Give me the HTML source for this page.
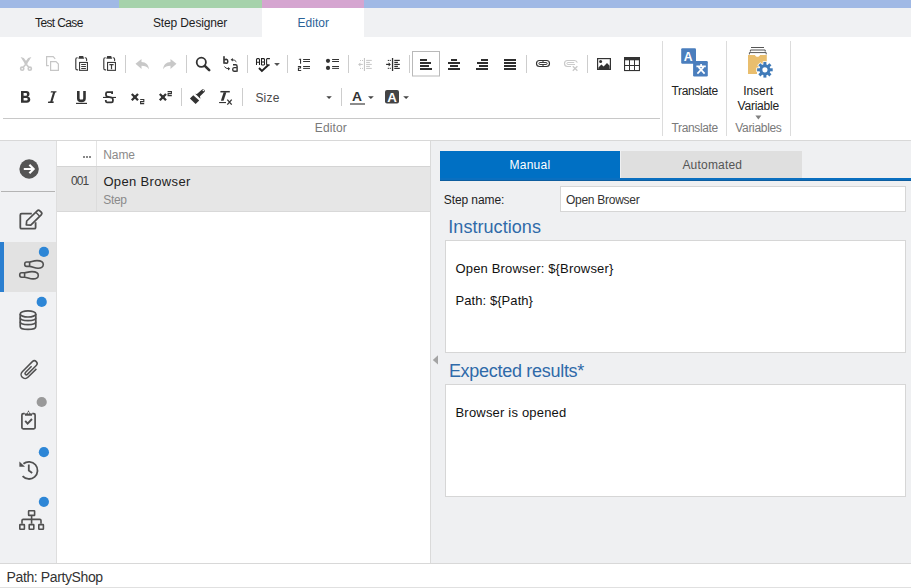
<!DOCTYPE html>
<html><head><meta charset="utf-8">
<style>
html,body{margin:0;padding:0;}
body{width:911px;height:588px;position:relative;overflow:hidden;background:#fff;font-family:"Liberation Sans",sans-serif;}
.b{position:absolute;}
.t{position:absolute;white-space:pre;font-family:"Liberation Sans",sans-serif;}
</style></head><body>
<!-- top color stripe -->
<div class="b" style="left:0;top:0;width:119px;height:8px;background:#a0b9e5"></div>
<div class="b" style="left:119px;top:0;width:143px;height:8px;background:#a6d2ab"></div>
<div class="b" style="left:262px;top:0;width:102px;height:8px;background:#d5a5d0"></div>
<div class="b" style="left:364px;top:0;width:547px;height:8px;background:#a0b9e5"></div>
<!-- tab bar -->
<div class="b" style="left:0;top:8px;width:911px;height:29px;background:#f0f1f3"></div>
<div class="b" style="left:262px;top:8px;width:102px;height:29px;background:#fff"></div>
<!-- ribbon -->
<div class="b" style="left:3px;top:118px;width:657px;height:1px;background:#c8c8c8"></div>
<div class="b" style="left:662px;top:41px;width:1px;height:95px;background:#dcdcdc"></div>
<div class="b" style="left:726px;top:41px;width:1px;height:95px;background:#dcdcdc"></div>
<div class="b" style="left:790px;top:41px;width:1px;height:95px;background:#dcdcdc"></div>
<div class="b" style="left:0;top:140px;width:911px;height:1px;background:#d8d8d8"></div>
<!-- sidebar -->
<div class="b" style="left:0;top:141px;width:56px;height:422px;background:#f0f1f3"></div>
<div class="b" style="left:56px;top:141px;width:1px;height:422px;background:#dedede"></div>
<div class="b" style="left:1px;top:191px;width:54px;height:1px;background:#b4b4b4"></div>
<div class="b" style="left:0;top:242px;width:56px;height:50px;background:#e2e2e2"></div>
<div class="b" style="left:0;top:242px;width:4px;height:50px;background:#2b7fd0"></div>
<!-- grid -->
<div class="b" style="left:96px;top:141px;width:1px;height:70px;background:#e4e4e4"></div>
<div class="b" style="left:57px;top:166px;width:373px;height:1px;background:#d4d4d4"></div>
<div class="b" style="left:57px;top:167px;width:373px;height:44px;background:#e6e6e6"></div>
<div class="b" style="left:96px;top:167px;width:1px;height:44px;background:#dcdcdc"></div>
<div class="b" style="left:57px;top:211px;width:373px;height:1px;background:#d8d8d8"></div>
<div class="b" style="left:83px;top:156px;width:2px;height:2px;background:#888"></div>
<div class="b" style="left:86px;top:156px;width:2px;height:2px;background:#888"></div>
<div class="b" style="left:89px;top:156px;width:2px;height:2px;background:#888"></div>
<div class="b" style="left:430px;top:141px;width:1px;height:422px;background:#dadada"></div>
<!-- right panel -->
<div class="b" style="left:431px;top:141px;width:480px;height:422px;background:#eff0f2"></div>
<div class="b" style="left:440px;top:151px;width:180px;height:30px;background:#0070c4"></div>
<div class="b" style="left:621px;top:151px;width:181px;height:27px;background:#dfdfdf"></div>
<div class="b" style="left:440px;top:178px;width:471px;height:3px;background:#0a6fc0"></div>
<div class="b" style="left:440px;top:180px;width:471px;height:1px;background:#0d5d9f"></div>
<div class="b" style="left:560px;top:186px;width:344px;height:24px;background:#fff;border:1px solid #d6d6d6"></div>
<div class="b" style="left:445px;top:240px;width:459px;height:111px;background:#fff;border:1px solid #d6d6d6"></div>
<div class="b" style="left:445px;top:384px;width:459px;height:111px;background:#fff;border:1px solid #d6d6d6"></div>
<!-- status -->
<div class="b" style="left:0;top:563px;width:911px;height:1px;background:#d8d8d8"></div>
<div class="b" style="left:0;top:587px;width:911px;height:1px;background:#e0e0e0"></div>
<svg class="b" style="left:0;top:0" width="911" height="588" viewBox="0 0 911 588">
<g fill="none" stroke-linecap="butt">
<!-- separators row1 -->
<g stroke="#cdcdcd" stroke-width="1">
<line x1="125.5" y1="55" x2="125.5" y2="73"/>
<line x1="186.5" y1="55" x2="186.5" y2="73"/>
<line x1="247.5" y1="55" x2="247.5" y2="73"/>
<line x1="287.5" y1="55" x2="287.5" y2="73"/>
<line x1="348.5" y1="55" x2="348.5" y2="73"/>
<line x1="409.5" y1="55" x2="409.5" y2="73"/>
<line x1="526.5" y1="55" x2="526.5" y2="73"/>
<line x1="587.5" y1="55" x2="587.5" y2="73"/>
<line x1="181.5" y1="88" x2="181.5" y2="106"/>
<line x1="242.5" y1="88" x2="242.5" y2="106"/>
<line x1="341.5" y1="88" x2="341.5" y2="106"/>
</g>
<!-- scissors (disabled) -->
<path d="M20.6 56.9 L23.8 57.9 L27.6 63 L26 65.6 Z" fill="#c8c8c8"/>
<path d="M31.4 56.9 L28.2 57.9 L24.4 63 L26 65.6 Z" fill="#c8c8c8"/>
<g stroke="#c8c8c8" stroke-width="1.6" fill="none">
<path d="M25.6 64.4 L23.4 67 M26.4 64.4 L28.6 67"/>
<circle cx="22.2" cy="68.7" r="1.6"/>
<circle cx="29.8" cy="68.7" r="1.6"/>
</g>
<!-- copy (disabled) -->
<g stroke="#c6c6c6" stroke-width="1.2" fill="none">
<path d="M48.8 65.6 H46.6 V56.6 H53.2 L55.2 58.8"/>
<path d="M50.6 61.6 H56 L58.4 64 V70.4 H50.6 Z"/>
</g>
<!-- paste -->
<g stroke="#3a3a3a" stroke-width="1.15" stroke-linecap="round" stroke-linejoin="round">
<path d="M77.2 57.7 Q75.8 57.7 75.8 59.2 V68.4 Q75.8 69.8 77.3 69.8 H77.7"/>
<path d="M85.2 57.7 Q86.6 57.7 86.6 59.2 V60.6"/>
<path d="M105.2 57.7 Q103.8 57.7 103.8 59.2 V68.4 Q103.8 69.8 105.3 69.8 H105.7"/>
<path d="M113.2 57.7 Q114.6 57.7 114.6 59.2 V60.6"/>
</g>
<g stroke="#3a3a3a" stroke-width="1.1">
<rect x="79.55" y="62.45" width="7.9" height="7.9"/>
<path d="M81.2 64.5 H85.9 M81.2 66.5 H85.9 M81.2 68.5 H85.9"/>
<rect x="107.55" y="62.45" width="7.9" height="7.9"/>
<path d="M109.4 64.6 H113.6 M111.5 64.6 V69.2" stroke-width="1.2"/>
</g>
<path d="M78.3 58.7 L79.2 56 H83.2 L84.1 58.7 Z" fill="#3a3a3a"/>
<path d="M106.3 58.7 L107.2 56 H111.2 L112.1 58.7 Z" fill="#3a3a3a"/>
<!-- undo/redo disabled -->
<path d="M135.5 63.8 L141.5 59 V62 C146 62 148.5 65 149 69.2 C147 66.6 145 65.8 141.5 65.8 V69 Z" fill="#c8c8c8"/>
<path d="M176.5 63.8 L170.5 59 V62 C166 62 163.5 65 163 69.2 C165 66.6 167 65.8 170.5 65.8 V69 Z" fill="#c8c8c8"/>
<!-- search -->
<circle cx="201.3" cy="62.3" r="4.6" stroke="#333" stroke-width="1.8"/>
<path d="M204.8 65.8 L209.2 70.2" stroke="#333" stroke-width="2.6" stroke-linecap="round"/>
<!-- replace -->
<g fill="#333">
<rect x="223.2" y="56.2" width="1.6" height="7.5"/>
</g>
<path d="M224.4 60.2 Q225.2 59.2 226.4 59.2 Q227.8 59.4 227.8 61.4 Q227.8 63.2 226.4 63.2 Q225 63.2 224.4 62.6" stroke="#333" stroke-width="1.5" fill="none"/>
<path d="M233 64.8 H235.6 Q237.1 64.8 237.1 66.4 V71.7" stroke="#333" stroke-width="1.4" fill="none"/>
<path d="M236.8 67.6 H234 Q232.7 67.6 232.7 69.6 Q232.7 71.2 234 71.2 H236.8" stroke="#333" stroke-width="1.4" fill="none"/>
<path d="M236.4 61.8 Q235 59.8 232 59.7" stroke="#333" stroke-width="1" fill="none"/>
<path d="M230.6 59.7 L232.8 58 V61.4 Z" fill="#333"/>
<path d="M224.4 66.6 Q225.8 68.7 228.6 68.7" stroke="#333" stroke-width="1" fill="none"/>
<path d="M230.2 68.7 L228 67 V70.4 Z" fill="#333"/>
<!-- spell -->
<g stroke="#222" stroke-width="1.05" fill="none">
<path d="M256.5 65 V59.6 Q256.5 58.6 257.5 58.6 H258.6 Q259.5 58.6 259.5 59.6 V65 M256.5 62.3 H259.5"/>
<path d="M261.5 65 V58.6 H263.8 L264.5 59.3 V61.3 L263.8 61.9 H261.5 M263.8 61.9 L264.5 62.5 V64.3 L263.8 65 H261.5"/>
<path d="M269.9 58.6 H267.2 L266.6 59.2 V64.4 L267.2 65 H269.9"/>
</g>
<path d="M259 68 L261.9 71 L268.6 64.8" stroke="#222" stroke-width="1.9" fill="none"/>
<path d="M274.1 63.1 H279.9 L277 65.9 Z" fill="#555"/>
<!-- ordered list -->
<g fill="#333">
<path d="M298.7 59.6 L299.4 58.8 H301.1 V63.8 H300 V59.8 H298.7 Z"/>
<path d="M297.9 66 H301.1 V68.6 H299 V69.9 H301.2 V70.9 H297.9 V67.6 H300 V67 H297.9 Z"/>
<rect x="303.1" y="59" width="6.9" height="1"/>
<rect x="303.1" y="61" width="6.9" height="1"/>
<rect x="303.1" y="66" width="6.9" height="1"/>
<rect x="303.1" y="67.9" width="6.9" height="1"/>
<circle cx="328" cy="60.8" r="2.1"/>
<circle cx="328" cy="67.9" r="2.1"/>
<rect x="332.1" y="59" width="6.9" height="1"/>
<rect x="332.1" y="61" width="6.9" height="1"/>
<rect x="332.1" y="66" width="6.9" height="1"/>
<rect x="332.1" y="67.9" width="6.9" height="1"/>
</g>
<!-- outdent (disabled) -->
<g fill="#c6c6c6">
<rect x="363.9" y="58" width="1.1" height="13"/>
<rect x="366.1" y="59.9" width="5.7" height="1"/>
<rect x="366.1" y="61.9" width="3.8" height="1"/>
<rect x="366.1" y="63.9" width="5.7" height="1"/>
<rect x="366.1" y="65.9" width="3.8" height="1"/>
<rect x="366.1" y="67.9" width="5.7" height="1"/>
<rect x="360" y="60" width="1" height="1"/><rect x="362" y="60" width="1" height="1"/>
<rect x="360" y="67.9" width="1" height="1"/><rect x="362" y="67.9" width="1" height="1"/>
<rect x="359.5" y="63.9" width="3.3" height="1"/>
<path d="M358.1 64.4 L360.4 62.4 V66.4 Z"/>
</g>
<!-- indent -->
<g fill="#2e2e2e">
<rect x="391.9" y="58" width="1.3" height="13"/>
<rect x="394.3" y="59.8" width="5.5" height="1.2"/>
<rect x="394.3" y="61.8" width="3.6" height="1.2"/>
<rect x="394.3" y="63.8" width="5.5" height="1.2"/>
<rect x="394.3" y="65.8" width="3.6" height="1.2"/>
<rect x="394.3" y="67.8" width="5.5" height="1.2"/>
<rect x="387.8" y="59.9" width="1.1" height="1.1"/><rect x="389.7" y="59.9" width="1.1" height="1.1"/>
<rect x="387.8" y="67.8" width="1.1" height="1.1"/><rect x="389.7" y="67.8" width="1.1" height="1.1"/>
<rect x="386.1" y="63.8" width="3" height="1.2"/>
<path d="M390.9 64.4 L388.6 62.3 V66.5 Z"/>
</g>
<!-- align box -->
<rect x="412.5" y="51.5" width="27" height="24.5" stroke="#b9b9b9" stroke-width="1"/>
<g fill="#2e2e2e">
<rect x="420" y="59" width="7" height="2"/><rect x="420" y="62" width="11" height="2"/><rect x="420" y="65" width="9" height="2"/><rect x="420" y="68" width="12" height="2"/>
<rect x="451" y="59" width="6" height="2"/><rect x="448" y="62" width="12" height="2"/><rect x="450" y="65" width="8" height="2"/><rect x="448" y="68" width="12" height="2"/>
<rect x="481" y="59" width="7" height="2"/><rect x="477" y="62" width="11" height="2"/><rect x="479" y="65" width="9" height="2"/><rect x="476" y="68" width="12" height="2"/>
<rect x="504" y="59" width="12" height="2"/><rect x="504" y="62" width="12" height="2"/><rect x="504" y="65" width="12" height="2"/><rect x="504" y="68" width="12" height="2"/>
</g>
<!-- link -->
<g stroke="#333" fill="none">
<rect x="536.5" y="60.5" width="13" height="6" rx="3" stroke-width="1.15"/>
<rect x="538.9" y="62.5" width="8.2" height="2" rx="1" stroke-width="0.95"/>
</g>
<rect x="542.5" y="61" width="1" height="1" fill="#333"/><rect x="542.5" y="65" width="1" height="1" fill="#333"/>
<g stroke="#c9c9c9" fill="none">
<path d="M571 66.5 H567.5 A3 3 0 0 1 567.5 60.5 H574.5 A3 3 0 0 1 577.3 62.6" stroke-width="1.15"/>
<path d="M575 64.5 H567.9 A1 1 0 0 1 567.9 62.5 H574.2" stroke-width="0.95"/>
<path d="M572.8 66.2 L577.4 70.8 M577.4 66.2 L572.8 70.8" stroke-width="1.3"/>
</g>
<!-- image -->
<rect x="597.6" y="58.6" width="12.8" height="10.8" stroke="#333" stroke-width="1.2" fill="none"/>
<circle cx="600.6" cy="61.5" r="1.5" fill="#333"/>
<path d="M598.4 68.9 V67.4 L601.4 64.6 L603.6 66.6 L607 62.9 L609.6 65.8 V68.9 Z" fill="#333"/>
<!-- table -->
<rect x="624.55" y="57.55" width="14.9" height="13" stroke="#333" stroke-width="1.1" fill="none"/>
<rect x="624" y="57" width="16" height="3.3" fill="#333"/>
<path d="M629.5 60 V70.5 M634.5 60 V70.5 M624.5 65.5 H639.5" stroke="#333" stroke-width="1"/>

<!-- Row 2 -->
<path fill-rule="evenodd" fill="#333" d="M21 91 H26.4 Q29.5 91 29.5 93.9 Q29.5 95.9 28 96.6 Q30.3 97.3 30.3 99.6 Q30.3 102.7 26.8 102.7 H21 Z M23.6 93.1 V95.8 H26 Q27 95.8 27 94.45 Q27 93.1 26 93.1 Z M23.6 97.9 V100.6 H26.5 Q27.7 100.6 27.7 99.25 Q27.7 97.9 26.5 97.9 Z"/>
<path d="M51 91.2 H56.6 L56.2 92.6 H50.6 Z M48.3 101.6 H53.9 L53.5 103 H47.9 Z M53 92.4 H55.2 L52.4 101.8 H50.2 Z" fill="#333"/>
<path d="M78.3 91.1 V98.4 Q78.3 100.9 81.4 100.9 Q84.5 100.9 84.5 98.4 V91.1" stroke="#333" stroke-width="2.6" fill="none"/>
<rect x="76" y="102.8" width="11" height="1.2" fill="#333"/>
<path d="M112.1 93.9 V92.2 H107.4 Q106 92.2 106 93.6 V95 Q106 96.4 107.4 96.7 L111.6 97.6 Q112.9 98 112.9 99.4 V101 Q112.9 102.3 111.5 102.3 H107 Q105.8 102.3 105.8 101.1 V100.1" stroke="#333" stroke-width="1.8" fill="none"/>
<rect x="103" y="96.9" width="13" height="1.1" fill="#333"/>
<g stroke="#333" stroke-width="2">
<path d="M131.8 94 L138 100.2 M138 94 L131.8 100.2" stroke-width="2.3"/>
<path d="M159.8 94 L166 100.2 M166 94 L159.8 100.2" stroke-width="2.3"/>
</g>
<g stroke="#333" stroke-width="1.1" fill="none">
<path d="M140.2 99.5 H143.8 V101.6 H140.6 V103.6 H144.2"/>
<path d="M167.6 91.6 H171.4 V93.6 H168.1 V95.6 H171.8"/>
</g>
<rect x="133.4" y="95.6" width="3" height="3" fill="#333"/><rect x="161.4" y="95.6" width="3" height="3" fill="#333"/>
<!-- brush -->
<path d="M189.9 98.4 L193.3 95.2 L199.2 100.6 L195.6 103.9 Z" fill="#333"/>
<path d="M195.2 93.7 L196.9 94 L202.1 89.4 A1.9 1.9 0 0 1 204.7 91.8 L200 96.2 L200.4 98.7 Z" fill="#333"/>
<circle cx="203.3" cy="90.5" r="0.75" fill="#fff"/>
<!-- Tx -->
<path d="M220.4 91.7 H229.8" stroke="#333" stroke-width="1.5"/>
<path d="M223.6 92.2 L226.4 92.2 L223.6 100.8 L220.9 100.8 Z" fill="#333"/>
<rect x="219.1" y="102" width="6.9" height="1.1" fill="#333"/>
<path d="M227.3 99.6 L231.7 104.6 M231.7 99.6 L227.3 104.6" stroke="#333" stroke-width="1.3"/>
<!-- size dropdown arrow -->
<path d="M326.3 96.3 H331.8 L329.05 99 Z" fill="#444"/>
<!-- A color -->
<text x="352" y="100.8" font-family="Liberation Sans" font-size="13" font-weight="700" fill="#333" textLength="10" lengthAdjust="spacingAndGlyphs">A</text>
<rect x="350" y="103" width="15" height="2" fill="#8c8c8c"/>
<path d="M368 96.3 H373.8 L370.9 99 Z" fill="#444"/>
<rect x="385" y="90" width="14" height="13.6" rx="2" fill="#444"/>
<text x="387.2" y="101.6" font-family="Liberation Sans" font-size="12" font-weight="700" fill="#fff" textLength="9.6" lengthAdjust="spacingAndGlyphs">A</text>
<path d="M403.2 96.3 H409 L406.1 99 Z" fill="#444"/>

<!-- Translate icon -->
<rect x="681.2" y="48.2" width="14.8" height="15.5" rx="1.2" fill="#4a7ebd"/>
<text x="683.8" y="60.5" font-family="Liberation Sans" font-size="13" font-weight="700" fill="#fff" textLength="8.8" lengthAdjust="spacingAndGlyphs">A</text>
<rect x="693.1" y="61.1" width="14.7" height="15.4" rx="1.2" fill="#4a7ebd"/>
<g stroke="#fff" stroke-width="1.7" fill="none">
<path d="M696.4 66.4 H705.8 M701.1 64 V66.4 M698.6 67.2 L704.6 73.6 M703.6 67.2 L697.4 73.6"/>
</g>
<!-- Insert variable icon -->
<g stroke="#555" stroke-width="1">
<path d="M751 47.5 H764"/>
<path d="M750.4 51.6 V50 H765.2 V51.6"/>
<path d="M749.4 54.4 V52.6 H766.2 V54.4"/>
</g>
<path d="M748 55 H755 C755.4 57.4 759.6 57.4 760 55 H766.8 V64 H762 L757 69 V74 H748 Z" fill="#e9be6e"/>
<g fill="#fff">
<circle cx="764.9" cy="69.8" r="6.6"/>
<rect x="762.7" y="61.2" width="4.4" height="17.2" rx="0.5"/>
<rect x="756.3" y="67.6" width="17.2" height="4.4" rx="0.5"/>
<rect x="762.7" y="61.2" width="4.4" height="17.2" transform="rotate(45 764.9 69.8)"/>
<rect x="762.7" y="61.2" width="4.4" height="17.2" transform="rotate(-45 764.9 69.8)"/>
</g>
<g fill="#3f7ab8">
<circle cx="764.9" cy="69.8" r="5.5"/>
<rect x="763.4" y="62" width="3" height="15.6"/>
<rect x="757.1" y="68.3" width="15.6" height="3"/>
<rect x="763.4" y="62" width="3" height="15.6" transform="rotate(45 764.9 69.8)"/>
<rect x="763.4" y="62" width="3" height="15.6" transform="rotate(-45 764.9 69.8)"/>
</g>
<circle cx="764.9" cy="69.8" r="2.6" fill="#fff"/>
<path d="M755.4 115.6 H761.4 L758.4 119.6 Z" fill="#808080"/>

<!-- sidebar icons -->
<circle cx="29.1" cy="169" r="9.7" fill="#555"/>
<path d="M23.8 169 H33.6 M29.4 164.8 L33.6 169 L29.4 173.2" stroke="#fff" stroke-width="2.2"/>
<!-- edit -->
<path d="M31.8 213.6 H21.6 Q20.3 213.6 20.3 214.9 V227.4 Q20.3 228.7 21.6 228.7 H34.3 Q35.6 228.7 35.6 227.4 V222.2" stroke="#505050" stroke-width="1.8" fill="none"/>
<path d="M26.3 224.9 L26.7 221 L37.2 210.8 Q38.5 209.5 39.8 210.8 L41.2 212.2 Q42.5 213.5 41.2 214.8 L30.8 225.2 Z" stroke="#505050" stroke-width="1.7" stroke-linejoin="round" fill="none"/>
<path d="M36 212.6 L39.4 216" stroke="#505050" stroke-width="1.4"/>
<!-- footprints -->
<g stroke="#505050" stroke-width="1.6" fill="none">
<path d="M29.6 262 C31.5 262 33 260.6 37 260.6 C41 260.6 43.3 262.4 43.3 264.6 C43.3 267 41 268.4 38 268.3 C34.5 268.1 32 266.4 29.6 266.4 H26.6 C25.4 266.4 24.7 265.6 24.7 264.2 C24.7 262.8 25.4 262 26.6 262 Z M29.6 262 V266.4"/>
<path d="M24.6 272.8 C26.5 272.8 28 271.6 32 271.6 C36 271.6 38.3 273.2 38.3 275.4 C38.3 277.8 36 279 33 278.9 C29.5 278.8 27 277.2 24.6 277.2 H21.6 C20.4 277.2 19.7 276.4 19.7 275 C19.7 273.6 20.4 272.8 21.6 272.8 Z M24.6 272.8 V277.2"/>
</g>
<!-- database -->
<g stroke="#505050" stroke-width="1.7" fill="none">
<ellipse cx="28" cy="313.9" rx="7.8" ry="3.1"/>
<path d="M20.2 313.9 V326.4 C20.2 330.4 35.8 330.4 35.8 326.4 V313.9"/>
<path d="M20.2 317.8 C20.2 321.6 35.8 321.6 35.8 317.8"/>
<path d="M20.2 321.8 C20.2 325.6 35.8 325.6 35.8 321.8"/>
</g>
<!-- paperclip -->
<path transform="translate(29.4 370.2) rotate(45) scale(0.95)" d="M4.2 -6.2 V6.4 A4.2 4.2 0 0 1 -4.2 6.4 V-8.6 A2.9 2.9 0 0 1 1.6 -8.6 V4.6 A1.45 1.45 0 0 1 -1.3 4.6 V-4.6" stroke="#505050" stroke-width="1.6" fill="none"/>
<!-- clipboard -->
<g stroke="#505050" fill="none">
<path d="M24.8 413.6 H23.2 Q21.9 413.6 21.9 414.9 V427.6 Q21.9 428.9 23.2 428.9 H33.8 Q35.1 428.9 35.1 427.6 V414.9 Q35.1 413.6 33.8 413.6 H32.2" stroke-width="1.7"/>
<path d="M25.2 420.9 L27.6 423.6 L32 419" stroke-width="1.9"/>
</g>
<path d="M25 415.8 V413.4 L27 413.2 L28.5 410.2 L30 413.2 L32 413.4 V415.8 Z" fill="#505050"/>
<circle cx="28.5" cy="412.9" r="0.8" fill="#f0f1f3"/>
<!-- history -->
<g stroke="#505050" stroke-width="1.8" fill="none">
<path d="M23.4 463.8 A8.6 8.6 0 1 1 22.6 476.2"/>
<path d="M28.8 464.4 V470.6 L32.2 473"/>
</g>
<path d="M19.4 461.4 V466.8 H25 Z" fill="#505050"/>
<!-- hierarchy -->
<g stroke="#505050" stroke-width="1.6" fill="none">
<rect x="28.6" y="510.8" width="6" height="4.6" rx="0.4"/>
<path d="M31.6 515.4 V523.8 M22 523.8 V520.6 Q22 519.4 23.2 519.4 H39.8 Q41 519.4 41 520.6 V523.8"/>
<rect x="19.8" y="524.6" width="4.6" height="4.6" rx="0.4"/>
<rect x="29.2" y="524.6" width="4.6" height="4.6" rx="0.4"/>
<rect x="38.8" y="524.6" width="4.6" height="4.6" rx="0.4"/>
</g>
<!-- dots -->
<circle cx="43.9" cy="251.9" r="5.1" fill="#2d86d6"/>
<circle cx="41.7" cy="301.9" r="5.1" fill="#2d86d6"/>
<circle cx="41.7" cy="402" r="5.1" fill="#999"/>
<circle cx="43.9" cy="452.2" r="5.1" fill="#2d86d6"/>
<circle cx="43.9" cy="501.8" r="5.1" fill="#2d86d6"/>
<!-- splitter arrow -->
<path d="M438 355.3 V364.6 L432.8 360 Z" fill="#a4a4a4"/>
</g>
</svg>

<div class="t" style="left:35.0px;top:17.0px;font-size:12px;line-height:12px;color:#1e1e1e;letter-spacing:-0.62px">Test Case</div>
<div class="t" style="left:153.0px;top:17.0px;font-size:12px;line-height:12px;color:#1e1e1e;letter-spacing:-0.14px">Step Designer</div>
<div class="t" style="left:297.5px;top:17.0px;font-size:12px;line-height:12px;color:#2c6399;letter-spacing:0.04px">Editor</div>
<div class="t" style="left:255.4px;top:91.6px;font-size:12px;line-height:12px;color:#4a4a4a;letter-spacing:0.23px">Size</div>
<div class="t" style="left:314.8px;top:122.0px;font-size:12px;line-height:12px;color:#7a7a7a;letter-spacing:0.12px">Editor</div>
<div class="t" style="left:671.5px;top:84.8px;font-size:12px;line-height:12px;color:#222;letter-spacing:-0.36px">Translate</div>
<div class="t" style="left:743.2px;top:85.0px;font-size:12px;line-height:12px;color:#222;letter-spacing:-0.04px">Insert</div>
<div class="t" style="left:737.6px;top:100.0px;font-size:12px;line-height:12px;color:#222;letter-spacing:-0.23px">Variable</div>
<div class="t" style="left:671.5px;top:122.4px;font-size:12px;line-height:12px;color:#7a7a7a;letter-spacing:-0.36px">Translate</div>
<div class="t" style="left:735.3px;top:122.4px;font-size:12px;line-height:12px;color:#7a7a7a;letter-spacing:-0.32px">Variables</div>
<div class="t" style="left:103.2px;top:148.5px;font-size:12px;line-height:12px;color:#8a8a8a;letter-spacing:-0.07px">Name</div>
<div class="t" style="left:71.0px;top:175.4px;font-size:12px;line-height:12px;color:#444;letter-spacing:-0.9px">001</div>
<div class="t" style="left:103.4px;top:175.2px;font-size:13px;line-height:13px;color:#222;letter-spacing:0.35px">Open Browser</div>
<div class="t" style="left:103.3px;top:193.6px;font-size:12px;line-height:12px;color:#8a8a8a;letter-spacing:-0.37px">Step</div>
<div class="t" style="left:509.6px;top:159.4px;font-size:12px;line-height:12px;color:#fff;letter-spacing:0.22px">Manual</div>
<div class="t" style="left:682.4px;top:158.9px;font-size:12px;line-height:12px;color:#555;letter-spacing:0.2px">Automated</div>
<div class="t" style="left:443.8px;top:194.0px;font-size:12px;line-height:12px;color:#222;letter-spacing:-0.09px">Step name:</div>
<div class="t" style="left:566.0px;top:194.3px;font-size:12px;line-height:12px;color:#333;letter-spacing:-0.27px">Open Browser</div>
<div class="t" style="left:448.3px;top:217.9px;font-size:18px;line-height:18px;color:#2f6aa9;letter-spacing:0.05px">Instructions</div>
<div class="t" style="left:455.5px;top:261.8px;font-size:13px;line-height:13px;color:#111;letter-spacing:0.17px">Open Browser: ${Browser}</div>
<div class="t" style="left:455.5px;top:293.6px;font-size:13px;line-height:13px;color:#111;letter-spacing:0.07px">Path: ${Path}</div>
<div class="t" style="left:448.9px;top:362.3px;font-size:18px;line-height:18px;color:#2f6aa9;letter-spacing:-0.29px">Expected results*</div>
<div class="t" style="left:455.5px;top:405.5px;font-size:13px;line-height:13px;color:#111;letter-spacing:0.19px">Browser is opened</div>
<div class="t" style="left:6.6px;top:569.8px;font-size:14px;line-height:14px;color:#333;letter-spacing:-0.39px">Path: PartyShop</div>
</body></html>
